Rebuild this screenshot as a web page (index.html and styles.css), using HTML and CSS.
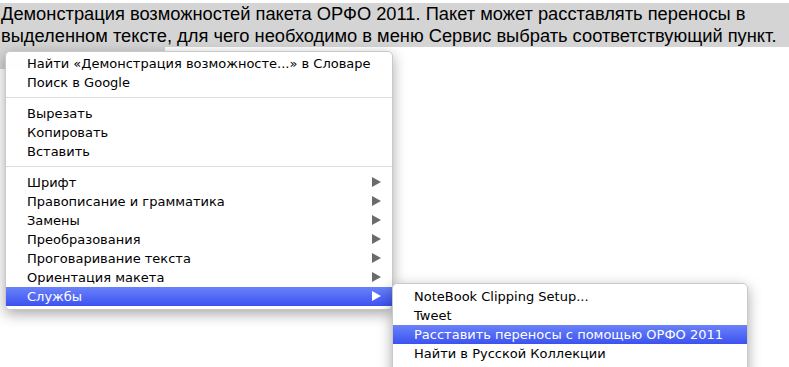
FILE: index.html
```
<!DOCTYPE html>
<html lang="ru">
<head>
    <meta charset="UTF-8">
    <title>ОРФО 2011</title>
    <link rel="stylesheet" href="styles.css">
</head>
<body>
    <div class="doc">
        <div class="line sel">Демонстрация возможностей пакета ОРФО 2011. Пакет может расставлять переносы в</div>
        <div class="line sel">выделенном тексте, для чего необходимо в меню Сервис выбрать соответствующий пункт.</div>
        <div class="line"><span class="sel part"></span></div>
    </div>

    <div class="menu main">
        <div class="item">Найти «Демонстрация возможносте...» в Словаре</div>
        <div class="item">Поиск в Google</div>
        <div class="sep"></div>
        <div class="item">Вырезать</div>
        <div class="item">Копировать</div>
        <div class="item">Вставить</div>
        <div class="sep"></div>
        <div class="item sub">Шрифт</div>
        <div class="item sub">Правописание и грамматика</div>
        <div class="item sub">Замены</div>
        <div class="item sub">Преобразования</div>
        <div class="item sub">Проговаривание текста</div>
        <div class="item sub">Ориентация макета</div>
        <div class="item sub active">Службы</div>
    </div>

    <div class="menu services">
        <div class="item">NoteBook Clipping Setup...</div>
        <div class="item">Tweet</div>
        <div class="item active">Расставить переносы с помощью ОРФО 2011</div>
        <div class="item">Найти в Русской Коллекции</div>
        <div class="item">Добавить в iTunes как звуковую дорожку</div>
    </div>
</body>
</html>
```

FILE: styles.css
```
body {
    margin: 0;
    background: white;
    overflow: hidden;
    height: 367px;
}
.doc {
    padding-top: 3px;
    font-family: "Liberation Sans", Arial, sans-serif;
    font-size: 18.3px;
    color: black;
}
.line {
    height: 22px;
    line-height: 22px;
    white-space: nowrap;
    padding-left: 1px;
}
.sel {
    background: #d4d4d4;
}
.part {
    display: inline-block;
    width: 165px;
    height: 22px;
    vertical-align: top;
    margin-left: -1px;
}
.menu {
    position: absolute;
    background: rgba(255, 255, 255, 0.97);
    border: 1px solid #c9c9c9;
    border-radius: 5px;
    box-shadow: 0 4px 14px rgba(0, 0, 0, 0.35);
    font-family: "DejaVu Sans", "Lucida Grande", sans-serif;
    font-size: 13px;
    color: black;
}
.main {
    left: 5px;
    top: 51px;
    width: 386px;
    padding: 2px 0 3px;
}
.services {
    left: 392px;
    top: 283px;
    width: 354px;
    padding: 3px 0 3px;
    border-bottom-left-radius: 0;
    border-bottom-right-radius: 0;
}
.item {
    height: 19px;
    line-height: 19px;
    padding-left: 21px;
    position: relative;
    white-space: nowrap;
}
.sub::after {
    content: "";
    position: absolute;
    right: 11px;
    top: 4px;
    border-left: 9px solid #6b6b6b;
    border-top: 5.5px solid transparent;
    border-bottom: 5.5px solid transparent;
}
.item.active {
    background: linear-gradient(#6a82f8, #3c52f1);
    color: white;
}
.item.active.sub::after {
    border-left-color: white;
}
.sep {
    height: 1px;
    background: #dcdcdc;
    margin: 5px 0 6px;
}
```
